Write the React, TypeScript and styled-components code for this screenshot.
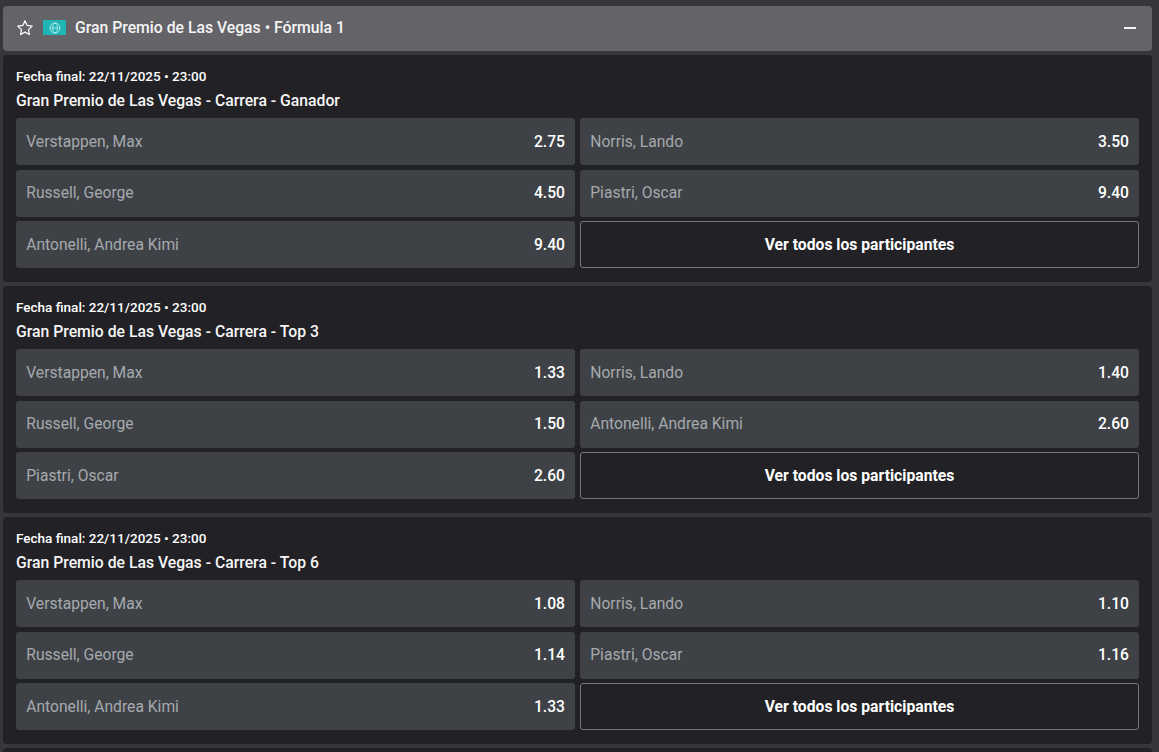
import React from "react";
import styled, { createGlobalStyle } from "styled-components";

const GlobalStyle = createGlobalStyle`
  html, body {
    margin: 0;
    padding: 0;
    height: 100%;
    overflow: hidden;
    background: #36373b;
    font-family: Roboto, "Liberation Sans", sans-serif;
  }
`;

const Page = styled.div`
  display: flex;
  flex-direction: column;
  gap: 4px;
  height: 752px;
  overflow: hidden;
  padding: 6px 7px 0 3px;
  box-sizing: border-box;
`;

const Header = styled.div`
  flex: none;
  height: 45px;
  display: flex;
  align-items: center;
  padding: 0 16px 2px 13px;
  box-sizing: border-box;
  border-radius: 4px;
  background: #646468;
  color: #fff;
`;

const StarIcon = styled.svg`
  width: 18px;
  height: 18px;
  fill: none;
  stroke: #fff;
  stroke-width: 1.6;
  stroke-linejoin: round;
`;

const RegionBadge = styled.span`
  width: 23px;
  height: 15px;
  margin-left: 9px;
  display: flex;
  align-items: center;
  justify-content: center;
  background: #1fb5b5;
  svg {
    width: 12px;
    height: 12px;
    fill: none;
    stroke: #e6fafa;
    stroke-width: 1.2;
  }
`;

const HeaderTitle = styled.span`
  margin-left: 9px;
  font-size: 15.75px;
  font-weight: 500;
  color: #f4f4f5;
`;

const Collapse = styled.span`
  margin-left: auto;
  width: 12px;
  height: 2px;
  background: #f4f4f5;
`;

const Card = styled.section`
  flex: none;
  height: 227px;
  padding: 13px 13px 0;
  box-sizing: border-box;
  border-radius: 4px;
  background: #222226;
`;

const DateLine = styled.div`
  height: 16px;
  line-height: 16px;
  font-size: 13.5px;
  font-weight: 500;
  color: #fff;
`;

const MarketTitle = styled.div`
  margin-top: 7px;
  height: 19px;
  line-height: 19px;
  font-size: 15.75px;
  font-weight: 500;
  color: #f6f6f6;
`;

const Grid = styled.div`
  margin-top: 8px;
  display: grid;
  grid-template-columns: 559px 559px;
  grid-auto-rows: 47px;
  column-gap: 5px;
  row-gap: 4.5px;
`;

const Odd = styled.div`
  display: flex;
  align-items: center;
  justify-content: space-between;
  padding: 0 10px 0 10.25px;
  border-radius: 3px;
  background: #3e4246;
`;

const Name = styled.span`
  font-size: 15.65px;
  line-height: 18px;
  color: #a6a9ad;
`;

const Price = styled.span`
  font-size: 15.65px;
  line-height: 18px;
  font-weight: 500;
  color: #fff;
`;

const AllButton = styled.div`
  display: flex;
  align-items: center;
  justify-content: center;
  box-sizing: border-box;
  border: 1px solid #77777b;
  border-radius: 3px;
  font-size: 15.7px;
  font-weight: 700;
  color: #fff;
`;

type Market = {
  title: string;
  odds: [string, string][];
};

const markets: Market[] = [
  {
    title: "Gran Premio de Las Vegas - Carrera - Ganador",
    odds: [
      ["Verstappen, Max", "2.75"],
      ["Norris, Lando", "3.50"],
      ["Russell, George", "4.50"],
      ["Piastri, Oscar", "9.40"],
      ["Antonelli, Andrea Kimi", "9.40"],
    ],
  },
  {
    title: "Gran Premio de Las Vegas - Carrera - Top 3",
    odds: [
      ["Verstappen, Max", "1.33"],
      ["Norris, Lando", "1.40"],
      ["Russell, George", "1.50"],
      ["Antonelli, Andrea Kimi", "2.60"],
      ["Piastri, Oscar", "2.60"],
    ],
  },
  {
    title: "Gran Premio de Las Vegas - Carrera - Top 6",
    odds: [
      ["Verstappen, Max", "1.08"],
      ["Norris, Lando", "1.10"],
      ["Russell, George", "1.14"],
      ["Piastri, Oscar", "1.16"],
      ["Antonelli, Andrea Kimi", "1.33"],
    ],
  },
];

const App: React.FC = () => {
  return (
    <Page>
      <GlobalStyle />
      <Header>
        <StarIcon viewBox="0 0 24 24">
          <path d="M12 2.5l2.9 6.1 6.7.9-4.9 4.6 1.2 6.6L12 17.5l-5.9 3.2 1.2-6.6-4.9-4.6 6.7-.9z" />
        </StarIcon>
        <RegionBadge>
          <svg viewBox="0 0 24 24">
            <circle cx="12" cy="12" r="10" />
            <ellipse cx="12" cy="12" rx="4.5" ry="10" />
            <path d="M2 12h20" />
          </svg>
        </RegionBadge>
        <HeaderTitle>Gran Premio de Las Vegas • Fórmula 1</HeaderTitle>
        <Collapse />
      </Header>
      {markets.map((market) => (
        <Card key={market.title}>
          <DateLine>Fecha final: 22/11/2025 • 23:00</DateLine>
          <MarketTitle>{market.title}</MarketTitle>
          <Grid>
            {market.odds.map(([name, price]) => (
              <Odd key={name}>
                <Name>{name}</Name>
                <Price>{price}</Price>
              </Odd>
            ))}
            <AllButton>Ver todos los participantes</AllButton>
          </Grid>
        </Card>
      ))}
      <Card />
    </Page>
  );
};

export default App;
